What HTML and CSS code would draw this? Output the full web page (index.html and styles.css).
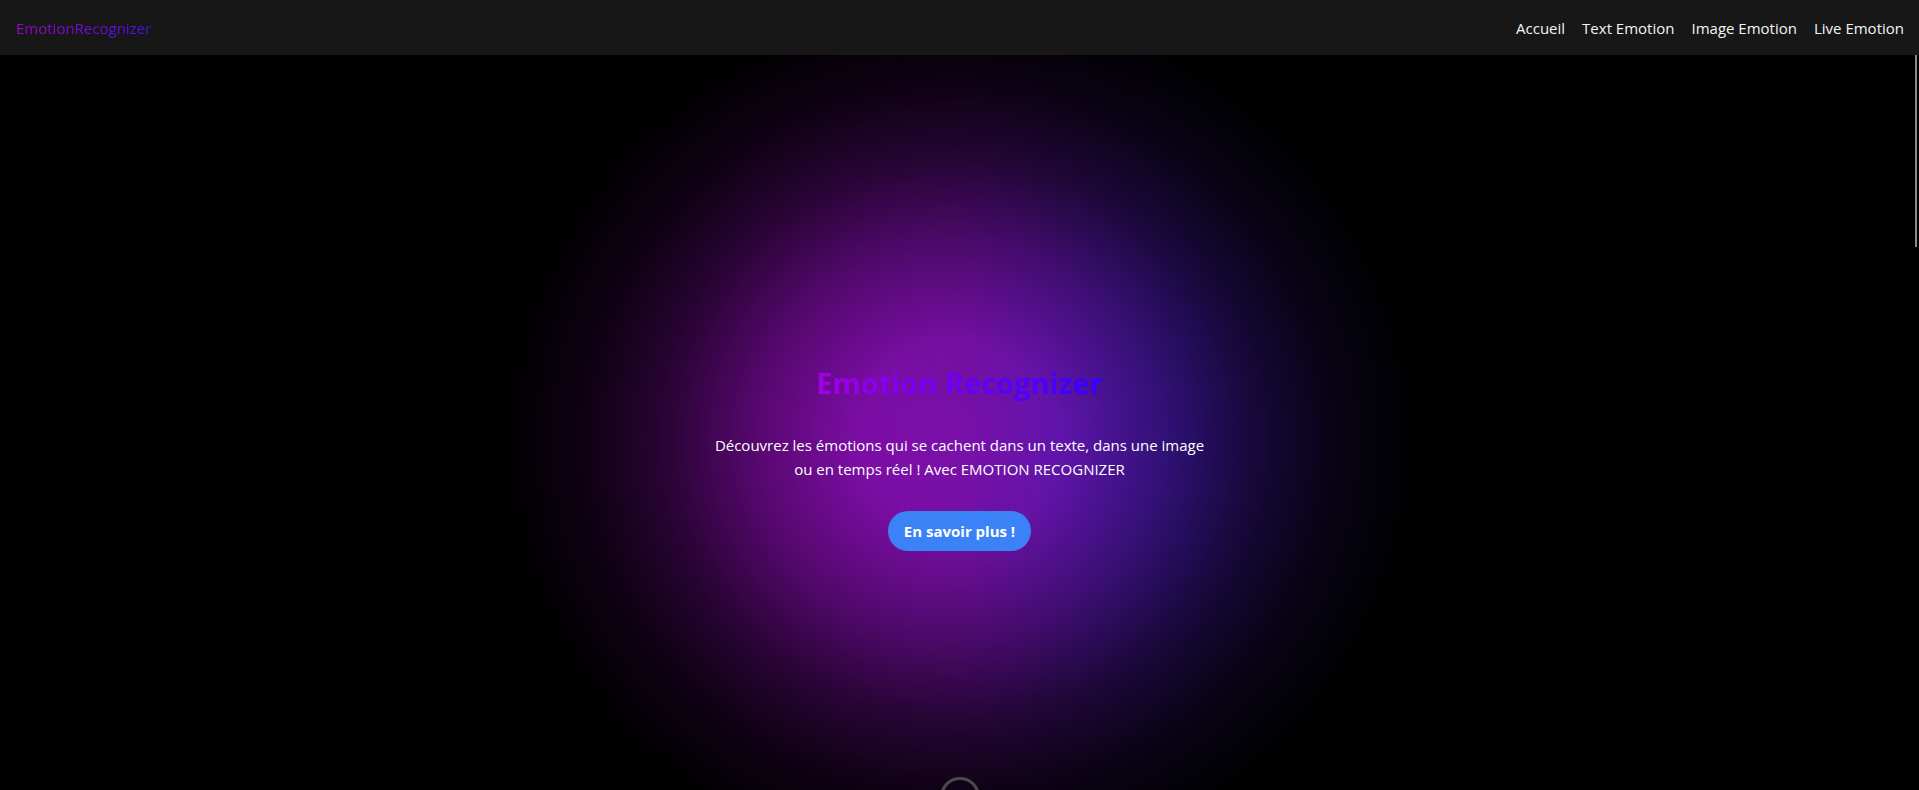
FILE: index.html
```html
<!DOCTYPE html>
<html lang="fr">
<head>
<meta charset="utf-8">
<title>EmotionRecognizer</title>
<link rel="stylesheet" href="styles.css">
</head>
<body>
<nav class="navbar">
  <a class="logo" href="#">EmotionRecognizer</a>
  <ul class="nav-links">
    <li><a href="#">Accueil</a></li>
    <li><a href="#">Text Emotion</a></li>
    <li><a href="#">Image Emotion</a></li>
    <li><a href="#">Live Emotion</a></li>
  </ul>
</nav>
<section class="hero">
  <div class="glow"></div>
  <div class="hero-content">
    <h1 class="hero-title">Emotion Recognizer</h1>
    <p class="hero-text">Découvrez les émotions qui se cachent dans un texte, dans une image ou en temps réel ! Avec EMOTION RECOGNIZER</p>
    <a class="hero-btn" href="#">En savoir plus !</a>
  </div>
  <div class="scroll-indicator"></div>
</section>
<div class="scroll-thumb"></div>
</body>
</html>
```

FILE: styles.css
```css
* { box-sizing: border-box; }
html, body { margin: 0; padding: 0; height: 100%; overflow: hidden; }
body {
  background: #000;
  font-family: "Open Sans", "Noto Sans", sans-serif;
  color: #fff;
}
a { text-decoration: none; }

.navbar {
  position: relative;
  z-index: 5;
  height: 55px;
  background: #171717;
  display: flex;
  align-items: center;
  justify-content: space-between;
  padding: 0 15px 0 16px;
}
.logo {
  font-size: 15px;
  background: linear-gradient(to right, #9a06c8, #4a10e8);
  -webkit-background-clip: text;
  background-clip: text;
  color: transparent;
}
.nav-links {
  list-style: none;
  margin: 0;
  padding: 0;
  display: flex;
  gap: 17px;
}
.nav-links a {
  color: #f3f4f6;
  font-size: 15px;
}

.hero {
  position: relative;
  height: 735px;
  display: flex;
  justify-content: center;
  padding-top: 310px;
}
.glow {
  position: absolute;
  left: 50%;
  top: -55px;
  width: 920px;
  height: 880px;
  margin-left: -460px;
  background: linear-gradient(to right, #8a0cb0 28%, #7a10aa 50%, #4a1cbe 75%);
  -webkit-mask-image: radial-gradient(closest-side, rgba(0,0,0,1) 0%, rgba(0,0,0,0.95) 22%, rgba(0,0,0,0.62) 45%, rgba(0,0,0,0.3) 64%, rgba(0,0,0,0.1) 82%, rgba(0,0,0,0) 100%);
  mask-image: radial-gradient(closest-side, rgba(0,0,0,1) 0%, rgba(0,0,0,0.95) 22%, rgba(0,0,0,0.62) 45%, rgba(0,0,0,0.3) 64%, rgba(0,0,0,0.1) 82%, rgba(0,0,0,0) 100%);
}
.hero-content {
  position: relative;
  z-index: 1;
  display: flex;
  flex-direction: column;
  align-items: center;
  text-align: center;
  width: 500px;
}
.hero-title {
  margin: 0;
  font-size: 29px;
  line-height: 36px;
  font-weight: 700;
  background: linear-gradient(to right, #a300e8, #3300ff);
  -webkit-background-clip: text;
  background-clip: text;
  color: transparent;
}
.hero-text {
  margin: 32px 0 0;
  font-size: 15px;
  line-height: 24px;
  color: #fff;
}
.hero-btn {
  margin-top: 30px;
  background: #3b82f6;
  color: #fff;
  font-weight: 700;
  font-size: 15px;
  line-height: 24px;
  padding: 8px 16px;
  border-radius: 9999px;
}
.scroll-indicator {
  position: absolute;
  left: 50%;
  top: 722px;
  width: 40px;
  height: 40px;
  margin-left: -20px;
  border: 3px solid #4b4b4b;
  border-radius: 50%;
}
.scroll-thumb {
  position: fixed;
  top: 11px;
  right: 2px;
  width: 2px;
  height: 236px;
  background: #8a8a8a;
}
```
